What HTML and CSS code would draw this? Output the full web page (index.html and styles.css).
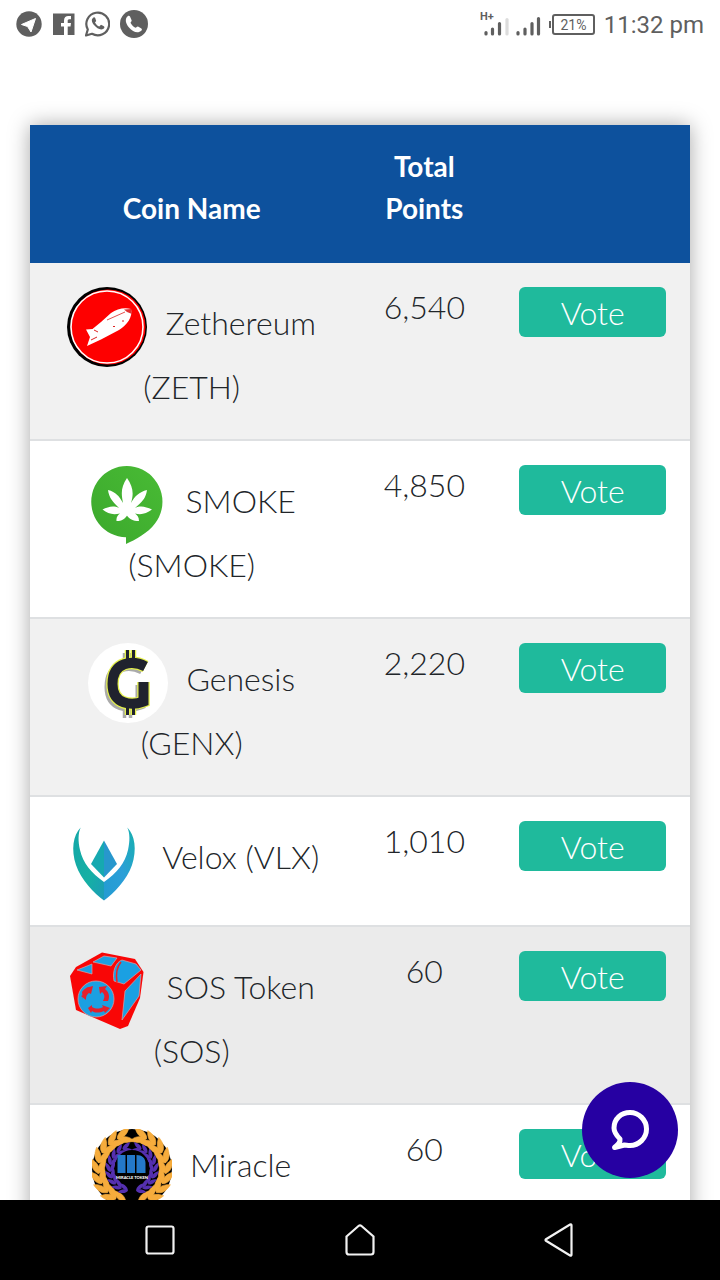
FILE: index.html
```html
<!DOCTYPE html>
<html lang="en">
<head>
<meta charset="utf-8">
<meta name="viewport" content="width=device-width, initial-scale=1">
<title>Coin Vote</title>
<link rel="stylesheet" href="styles.css">
</head>
<body>
<header class="status">
  <div class="status-apps">
    <svg width="27" height="30" viewBox="0 0 27 30"><circle cx="13" cy="15" r="12.7" fill="#5f5f5f"/><path d="M5.5 15.5 19.5 9.5 15 23 11.5 17.5Z" fill="#fff" stroke="#fff" stroke-linejoin="round"/></svg>
    <svg width="22" height="30" viewBox="0 0 22 30"><path d="M0 4.500H21.500V26H0Z" fill="#5f5f5f"/><path d="M11 26V17.500H8V14H11V11.500C11 8.300 13 7 15.200 7H18V10.300H16.200C15 10.300 14.700 11 14.700 12V14H18L17.500 17.500H14.700V26Z" fill="#fff"/></svg>
    <svg width="25" height="30" viewBox="1 0 25 30"><path d="M2 26.500 3.800 20.500A11.400 11.400 0 1 1 8 24.800Z" fill="none" stroke="#5f5f5f" stroke-width="2.200" stroke-linejoin="round"/><path d="M9.500 8.500C7 10 7.500 13 10 16 13 19.500 16.500 21.500 19.500 19.800 21 18.500 20.500 17.600 19.500 17L17 15.800 15.300 17.600C13.500 17 12 15.500 11 13.600L12.200 12 11.200 9C10.900 8.400 10.200 8.200 9.500 8.500Z" fill="#5f5f5f"/></svg>
    <svg width="28" height="30" viewBox="0 0 28 30"><circle cx="14" cy="15" r="14" fill="#5f5f5f"/><path d="M8 7C4.500 9.500 5.500 14.500 9 18.500 13 23 18 25 21.500 21.500 22.200 20.600 22 20 21 19.200L18 17.500C17 17.200 16.500 18.500 15.600 18.800 13.500 18 11.500 16 10.500 13.800 10.800 12.800 12 12.200 11.600 11.200L10 7.500C9.400 6.500 8.700 6.500 8 7Z" fill="#fff"/></svg>
  </div>
  <div class="status-info">
    <svg width="64" height="30" viewBox="0 0 64 30" stroke-width="3.200" stroke-linecap="round" stroke="#5f5f5f"><text class="net" x="0" y="11">H+</text><path d="M6 24.500V26M12.500 21V26M19.500 15.500V26M38 24.500V26M45 21V26M52 15.500V26M58.500 10.500V26" transform="translate(0 -1)"/><path d="M27 10.500V25" stroke="#dcdcdc"/></svg>
    <svg width="48" height="30" viewBox="0 0 48 30"><path d="M2 12V19" stroke="#5f5f5f" stroke-width="2"/><rect x="5" y="6" width="41" height="19" rx="2" fill="none" stroke="#5f5f5f" stroke-width="2"/><text class="charge" x="25.500" y="20.500" text-anchor="middle">21%</text></svg>
    <time class="clock">11:32 pm</time>
  </div>
</header>

<main class="page">
  <table class="coins">
    <colgroup><col class="col-name"><col class="col-points"><col class="col-vote"></colgroup>
    <thead><tr><th scope="col">Coin Name</th><th scope="col">Total Points</th><td></td></tr></thead>
    <tbody>
      <tr>
        <td class="name two-line"><svg class="logo" viewBox="0 0 80 80"><circle cx="40" cy="40" r="40"/><circle cx="41" cy="40" r="37.500" fill="#f00"/><circle cx="40" cy="40" r="36" fill="#fe0000" stroke="#fff" stroke-width="1.600"/><path d="M19 42.500 25.500 42 34 35 44 26C50 22 57 20 64 22 66 30 60 38 52 43L34 52.500 20 59 23 50Z" fill="#fff"/><path d="M40 33 58 25" stroke="#d22" stroke-width=".8"/><path d="M57 22.500 64 22 65 27 60 25Z" fill="#e03030"/><path d="M46 39.500H48M55 34H57M27 43 31 45M24 53 30 50" stroke="#d22" stroke-width="1"/></svg>Zethereum (ZETH)</td>
        <td>6,540</td><td><button class="vote" type="button">Vote</button></td>
      </tr>
      <tr>
        <td class="name two-line"><svg class="logo" viewBox="0 0 80 80"><defs><linearGradient id="leafy" x1="0" y1="1" x2="1" y2="0"><stop offset="0" stop-color="#3ba82c"/><stop offset="1" stop-color="#49bb35"/></linearGradient></defs><path d="M38 79V72.300A35.600 35.600 0 1 1 67 58.500C60 68 47 75 38 79Z" fill="url(#leafy)"/><path d="M39 13C33 22 33 28 35 38 31 31 28 27 20 25 21 33 25 37 31 43 25 40 20 42 14.500 44.500 20 49 25 50 32 48.500 30 50 28 52 28.500 56 34 56 37 54 39 50.500 41 54 45 56 51 56 51 52 49 50 47 48.500 53 50 58 49 64 44.500 58 42 53 40 47 43 54 37 58 33 59 25 51 27 47 31 43 38 46 28 45 22 39 13Z" fill="#fff"/><circle cx="39.500" cy="43.500" r="7" fill="#fff"/></svg>SMOKE (SMOKE)</td>
        <td>4,850</td><td><button class="vote" type="button">Vote</button></td>
      </tr>
      <tr>
        <td class="name two-line"><svg class="logo" viewBox="0 0 80 80"><defs><path id="gen" d="M57.500 23.500C45 17 24.500 18 24.500 41 24.500 62 44 63 55.500 58.500V39"/><path id="gen-bars" d="M39.500 7V20M45.500 7V20M39.500 60V72M45.500 60V72"/></defs><circle cx="40" cy="40" r="40" fill="#fff"/><g fill="none"><g stroke="#aaa" transform="translate(-3 3)"><use href="#gen" stroke-width="10"/><use href="#gen-bars" stroke-width="3.500"/></g><g stroke="#e4f04c"><use href="#gen" stroke-width="12.500"/><use href="#gen-bars" stroke-width="5.500"/></g><g stroke="#20222e"><use href="#gen" stroke-width="10"/><use href="#gen-bars" stroke-width="3"/></g></g></svg>Genesis (GENX)</td>
        <td>2,220</td><td><button class="vote" type="button">Vote</button></td>
      </tr>
      <tr>
        <td class="name"><svg class="logo" viewBox="0 0 80 80"><defs><linearGradient id="vl" x1="0" y1="0" x2="1" y2="1"><stop offset="0" stop-color="#13a6a8"/><stop offset=".6" stop-color="#15b0a4"/><stop offset="1" stop-color="#1d9bb8"/></linearGradient><linearGradient id="vr" x1="0" y1="1" x2="1" y2="0"><stop offset="0" stop-color="#239bd2"/><stop offset=".5" stop-color="#2b9fd8"/><stop offset="1" stop-color="#16b0ad"/></linearGradient></defs><path d="M16.700 6.500C9 14 7 29 12 44 17 59 30 72 40 79.500V61C27 52 19 42 16 29 14 20 14 12 16.700 6.500Z" fill="url(#vl)"/><path d="M63.300 6.500C71 14 73 29 68 44 63 59 50 72 40 79.500V61C53 52 61 42 64 29 66 20 66 12 63.300 6.500Z" fill="url(#vr)"/><path d="M40 19.500 27 43 40 56.500Z" fill="#16a9b0"/><path d="M40 19.500 53 43 40 56.500Z" fill="#2797cd"/></svg>Velox (VLX)</td>
        <td>1,010</td><td><button class="vote" type="button">Vote</button></td>
      </tr>
      <tr class="active">
        <td class="name two-line"><svg class="logo" viewBox="0 0 80 80"><path d="M1 25 7 16 33 1.500 66 8 74.500 21 71 47 59 75 51 78 7 59Z" fill="#f90606"/><g fill="#1ba0e2" stroke="#d9a3a8" stroke-width=".7"><path d="M8 19 23 13V23Z"/><path d="M24 11 35 5 48 7 42 15Z"/><path d="M45 30C43 20 47 11 53 9L67 13 72 19 55 33Z"/><path d="M56 40 72 23 70 45 53 69Z"/><circle cx="27" cy="48" r="18"/></g><path d="M52 11C47 17 47 25 48 31" fill="none" stroke="#e22" stroke-width="1.500"/><g fill="#e5202c"><path d="M24 35 22 43 20 42C17 44 17 47 17 49L12 45 14 44 14 49 13 41C15 38 18 36 20 36Z"/><path d="M30 36 38 35 36 38C40 41 41 46 39 50L34 50C36 46 36 44 33 41L31 43Z"/><path d="M19 57 23 54 23 56C27 58 30 58 34 56L33 54 41 57 36 62 35 60C30 62 26 62 23 60L22 62Z"/></g></svg>SOS Token (SOS)</td>
        <td>60</td><td><button class="vote" type="button">Vote</button></td>
      </tr>
      <tr>
        <td class="name"><svg class="logo" viewBox="0 0 80 80"><defs><g id="pair"><path d="M6 41C0 38 0 31 1 26 6 30 9 35 6 41Z"/><path d="M6 41C6 34 9 29 15 27 15 34 12 39 6 41Z"/></g><g id="branch"><use href="#pair" transform="rotate(-78 40 40)"/><use href="#pair" transform="rotate(-60 40 40)"/><use href="#pair" transform="rotate(-42 40 40)"/><use href="#pair" transform="rotate(-24 40 40)"/><use href="#pair" transform="rotate(-6 40 40)"/><use href="#pair" transform="rotate(12 40 40)"/><use href="#pair" transform="rotate(30 40 40)"/><use href="#pair" transform="rotate(48 40 40)"/><use href="#pair" transform="rotate(66 40 40)"/></g><g id="wreath"><use href="#branch"/><use href="#branch" transform="matrix(-1 0 0 1 80 0)"/></g></defs><circle cx="40" cy="40" r="40"/><use href="#wreath" fill="#f6ac3c" stroke="#f6ac3c" stroke-width=".6"/><circle cx="40" cy="40" r="26.500"/><use href="#wreath" fill="#5530b0" transform="translate(14 14) scale(.65)"/><circle cx="40" cy="38" r="17"/><path d="M25.500 26H33.500V44H25.500ZM35 26H43V44H35ZM44.500 26C50 26 53.500 29 53.500 34V44H44.500Z" fill="#2478c8"/><text class="logo-text" x="40" y="50" text-anchor="middle">MIRACLE TOKEN</text></svg>Miracle</td>
        <td>60</td><td><button class="vote" type="button">Vote</button></td>
      </tr>
    </tbody>
  </table>
  <button class="chat" type="button" aria-label="Chat"><svg width="48" height="48" viewBox="0 0 48 48" fill="none" stroke="#fff" stroke-width="5" stroke-linecap="round" stroke-linejoin="round"><path d="M14 33C10 29 8 26 8 22 8 13 15 6.500 24 6.500S40.500 14 40.500 23 33 39.500 24 39.500C21.500 39.500 20 39 18.500 39L8.500 41.500C12 38.500 14.500 37 14 33Z"/></svg></button>
</main>

<nav class="system">
  <button type="button" aria-label="Recent apps"><svg width="34" height="34" viewBox="0 0 34 34"><rect x="3.500" y="3.500" width="27" height="27" rx="2"/></svg></button>
  <button type="button" aria-label="Home"><svg width="34" height="34" viewBox="0 0 34 34"><path d="M3.500 13.500 15.500 3Q17 1.700 18.500 3L30.500 13.500V29Q30.500 31.500 28 31.500H6Q3.500 31.500 3.500 29Z"/></svg></button>
  <button type="button" aria-label="Back"><svg width="34" height="34" viewBox="0 0 34 34"><path d="M3 16.200Q2 17 3 17.800L27 32.500Q28.500 33 28.500 31.500V2.500Q28.500 1 27 1.500Z"/></svg></button>
</nav>
</body>
</html>
```
FILE: styles.css
```css
* { box-sizing: border-box; }

body {
  margin: 0;
  height: 100vh;
  display: flex;
  flex-direction: column;
  background: #fff;
  color: #212529;
  font-family: Lato, "Open Sans", sans-serif;
}

button {
  border: 0;
  padding: 0;
  font: inherit;
  cursor: pointer;
}

.status {
  flex: none;
  display: flex;
  justify-content: space-between;
  align-items: center;
  height: 48px;
  padding: 0 16px;
  color: #5f5f5f;
  font-family: Roboto, sans-serif;
}

.status svg { display: block; }

.status-apps, .status-info {
  display: flex;
  align-items: center;
}

.status-apps { gap: 10px; }
.status-info { gap: 4px; }
.status text { fill: #5f5f5f; stroke: none; }
.net { font-size: 11px; font-weight: 700; }
.charge { font-size: 14px; }

.clock {
  margin-left: 4px;
  padding-top: 2px;
  font-size: 24px;
  line-height: 46px;
}

.page {
  flex: 1;
  min-height: 0;
  position: relative;
  overflow: hidden;
  padding: 77px 30px 0;
}

.coins {
  width: 100%;
  table-layout: fixed;
  border-collapse: collapse;
  box-shadow: 0 0 20px rgba(0, 0, 0, 0.35);
  text-align: center;
}

.col-name { width: 49%; }
.col-points { width: 21.5%; }
.col-vote { width: 29.5%; }

thead { background: #0d519d; color: #fff; }

th {
  padding: 20px 24px 34px;
  vertical-align: bottom;
  font-size: 28px;
  font-weight: 700;
  line-height: 42px;
}

tbody tr {
  background: #fff;
  border-bottom: 2px solid #dee0e2;
}

tbody tr:nth-child(odd) { background: #f1f1f1; }
tbody tr.active { background: #ebebeb; }

tbody td {
  padding: 24px;
  vertical-align: top;
  font-size: 32px;
  font-weight: 300;
  line-height: 40px;
}

tbody .two-line { padding-bottom: 32px; }

.logo {
  width: 80px;
  height: 80px;
  margin-right: 18px;
  vertical-align: middle;
}

.logo-text {
  fill: #fff;
  font: 900 4px Lato, sans-serif;
}

.vote {
  display: block;
  width: 100%;
  padding: 6px 0 4px;
  border-radius: 6px;
  background: #1fba9c;
  color: #fff;
  line-height: 40px;
}

.chat {
  position: absolute;
  right: 42px;
  bottom: 22px;
  width: 96px;
  height: 96px;
  display: grid;
  place-items: center;
  border-radius: 50%;
  background: #2600a2;
}

.system {
  flex: none;
  display: flex;
  justify-content: space-evenly;
  align-items: center;
  height: 80px;
  background: #000;
}

.system button {
  width: 80px;
  height: 80px;
  display: grid;
  place-items: center;
  background: transparent;
}

.system svg {
  fill: none;
  stroke: #f2f2f2;
  stroke-width: 2.2px;
}
```
